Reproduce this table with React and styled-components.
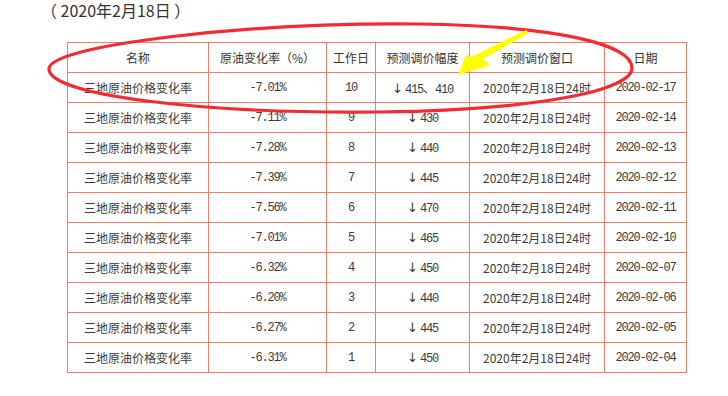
import React from "react";
import styled, { createGlobalStyle } from "styled-components";

const Global = createGlobalStyle`
  html, body { margin: 0; padding: 0; background: #fff; }
  body { font-family: "Noto Sans CJK SC", "Noto Sans", sans-serif; }
`;

const Page = styled.div`
  position: relative;
  width: 728px;
  height: 396px;
  overflow: hidden;
  background: #fff;
`;

const Title = styled.div`
  padding: 0 0 0 41px;
  height: 42px;
  box-sizing: border-box;
  font-family: "Noto Sans CJK SC", sans-serif;
  font-size: 16px;
  line-height: 20px;
  color: #333;
  white-space: pre;
`;

const Table = styled.table`
  margin-left: 67px;
  width: 619px;
  table-layout: fixed;
  border-collapse: collapse;
  color: #3a3a3a;
`;

const Col = styled.col`
  width: ${(p) => p.$w}px;
`;

const Cell = styled.td`
  border: 1px solid #e9806a;
  height: 30px;
  padding: 0;
  box-sizing: border-box;
  text-align: center;
  vertical-align: middle;
  white-space: nowrap;
  font-size: 12px;
  font-family: ${(p) =>
    p.$mono
      ? '"Liberation Mono", "DejaVu Sans Mono", "Noto Sans CJK SC", monospace'
      : '"Noto Sans CJK SC", sans-serif'};
  letter-spacing: ${(p) => (p.$mono ? "-1.2px" : "0")};
`;

const Head = styled(Cell).attrs({ as: "th" })`
  font-weight: normal;
  color: #333;
`;

const Down = styled.span`
  font-family: "DejaVu Sans", sans-serif;
  font-size: 13px;
  letter-spacing: 0;
  margin-right: 2px;
`;

const Comma = styled.span`
  font-family: "Noto Sans CJK SC", sans-serif;
  letter-spacing: 0;
`;

const Overlay = styled.svg`
  position: absolute;
  left: 0;
  top: 0;
  pointer-events: none;
`;

const rows = [
  ["-7.01%", "10", ["415", "410"], "2020-02-17"],
  ["-7.11%", "9", ["430"], "2020-02-14"],
  ["-7.28%", "8", ["440"], "2020-02-13"],
  ["-7.39%", "7", ["445"], "2020-02-12"],
  ["-7.56%", "6", ["470"], "2020-02-11"],
  ["-7.01%", "5", ["465"], "2020-02-10"],
  ["-6.32%", "4", ["450"], "2020-02-07"],
  ["-6.20%", "3", ["440"], "2020-02-06"],
  ["-6.27%", "2", ["445"], "2020-02-05"],
  ["-6.31%", "1", ["450"], "2020-02-04"],
];

export default function App() {
  return (
    <Page>
      <Global />
      <Title>{"（ 2020年2月18日 ）"}</Title>
      <Table>
        <colgroup>
          <Col $w={141} />
          <Col $w={118} />
          <Col $w={49} />
          <Col $w={94} />
          <Col $w={135} />
          <Col $w={82} />
        </colgroup>
        <thead>
          <tr>
            <Head>名称</Head>
            <Head>原油变化率（%）</Head>
            <Head>工作日</Head>
            <Head>预测调价幅度</Head>
            <Head>预测调价窗口</Head>
            <Head>日期</Head>
          </tr>
        </thead>
        <tbody>
          {rows.map((r, i) => (
            <tr key={i}>
              <Cell>三地原油价格变化率</Cell>
              <Cell $mono>{r[0]}</Cell>
              <Cell $mono>{r[1]}</Cell>
              <Cell $mono>
                <Down>↓</Down>
                {r[2][0]}
                {r[2][1] && (
                  <>
                    <Comma>、</Comma>
                    {r[2][1]}
                  </>
                )}
              </Cell>
              <Cell>2020年2月18日24时</Cell>
              <Cell $mono>{r[3]}</Cell>
            </tr>
          ))}
        </tbody>
      </Table>
      <Overlay width="728" height="396" viewBox="0 0 728 396">
        <path
          d="M 49 69 C 49 45, 250 22, 420 24 C 560 26, 632 45, 632 68 C 632 90, 540 110, 380 112 C 200 114, 49 95, 49 69 Z"
          fill="none"
          stroke="#f42a33"
          strokeWidth="3.2"
        />
        <polygon
          points="458,75 466,55 471,57 526,30 529,33 483,59 490,65"
          fill="#ffff00"
        />
      </Overlay>
    </Page>
  );
}
